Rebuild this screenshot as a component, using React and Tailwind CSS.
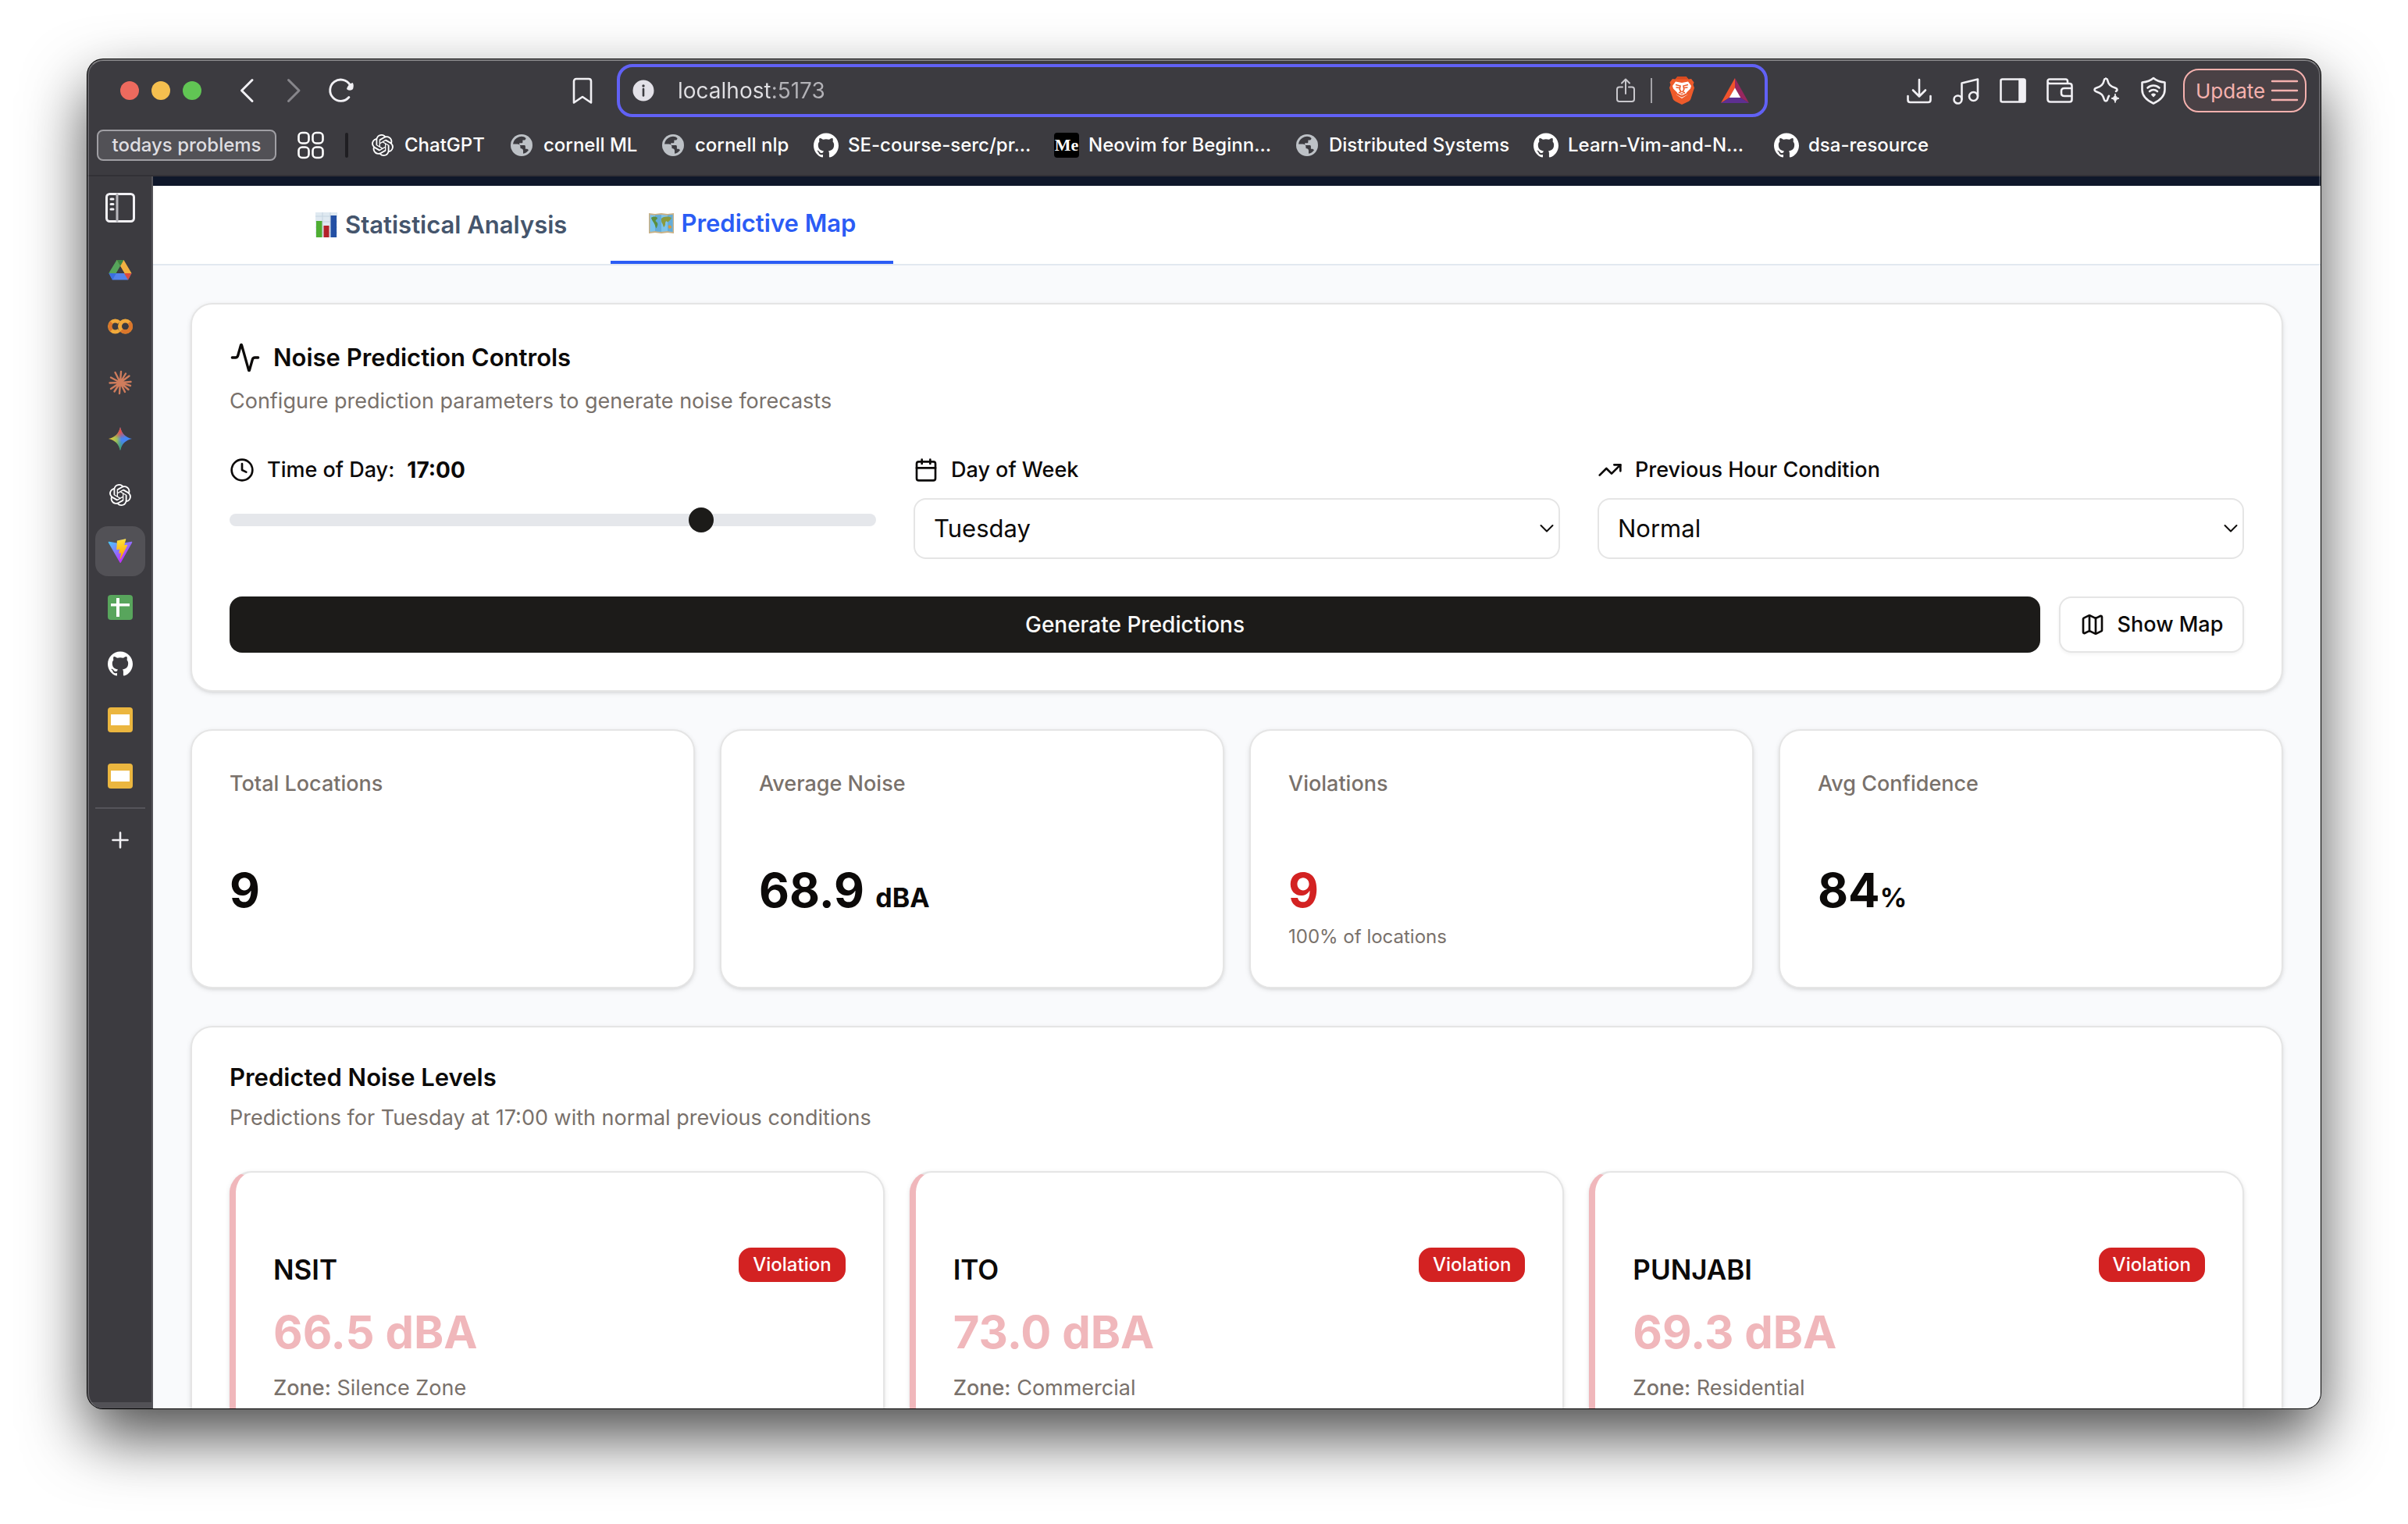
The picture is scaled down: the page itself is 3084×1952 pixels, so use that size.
import { useState } from "react";
import { Activity, Calendar, Clock, Map, TrendingUp } from "lucide-react";
import { SiGithub, SiOpenai } from "react-icons/si";

/* ---------- browser toolbar icons ---------- */

function Stroke({ children, className = "size-8", width = 3, box = "0 0 32 32" }) {
  return (
    <svg
      viewBox={box}
      className={className}
      fill="none"
      stroke="currentColor"
      strokeWidth={width}
      strokeLinecap="round"
      strokeLinejoin="round"
      aria-hidden="true"
    >
      {children}
    </svg>
  );
}

const BackIcon = () => (
  <Stroke>
    <path d="M23 2.500 9.500 16 23 29.500" />
  </Stroke>
);
const ForwardIcon = () => (
  <Stroke>
    <path d="M9.500 2.500 23 16 9.500 29.500" />
  </Stroke>
);
const ReloadIcon = () => (
  <Stroke className="size-[34px]" box="0 0 36 36">
    <path d="M28.500 27A14.500 14.500 0 1 1 30 10.500" />
    <path d="M26.500 15.500c1-3 3.500-6 6.500-7 .8 1.500.8 4.500 0 7-1.500 1.500-4.500 1.500-6.500 0z" fill="currentColor" strokeWidth="2" />
  </Stroke>
);
const BookmarkIcon = () => (
  <Stroke className="h-9 w-8" box="0 0 32 36" width={2.6}>
    <path d="M8 3h16c1.700 0 3 1.300 3 3v27.500L16 26 5 33.500V6c0-1.700 1.300-3 3-3z" />
  </Stroke>
);
const ShareIcon = () => (
  <Stroke className="size-8" width={2}>
    <path d="M12 11.500H8a3 3 0 0 0-3 3V27a3 3 0 0 0 3 3h16a3 3 0 0 0 3-3V14.500a3 3 0 0 0-3-3h-4M16 20V1.500M11 6.500l5-5 5 5" />
  </Stroke>
);
const DownloadIcon = () => (
  <Stroke className="size-9" box="0 0 36 36" width={2.6}>
    <path d="M18 4v21M10 17.500l8 8 8-8M3.500 25v5c0 2 1 3 3 3h23c2 0 3-1 3-3v-5" />
  </Stroke>
);
const MusicIcon = () => (
  <Stroke className="size-9" box="0 0 36 36" width={2.6}>
    <circle cx="7.500" cy="29.500" r="5" />
    <circle cx="27.500" cy="25.500" r="5.500" />
    <path d="M12.500 29V8.500L33 3.500V25" />
  </Stroke>
);
const PanelIcon = () => (
  <Stroke className="size-9" box="0 0 36 36" width={2.6}>
    <rect x="2.500" y="3.500" width="31" height="29" rx="2" />
    <path d="M26.500 4h6.500v28h-6.500z" fill="currentColor" />
  </Stroke>
);
const WalletIcon = () => (
  <Stroke className="size-9" box="0 0 36 36" width={2.6}>
    <path d="M28 9V6c0-1.500-1-2.500-2.500-2.500H5C3.500 3.500 2.500 4.500 2.500 6v23c0 2 1 3.500 3.500 3.500h24.500c2 0 3-1 3-3V12c0-2-1-3-3-3H6C4 9 2.500 8 2.500 6.500" />
    <path d="M33 15H24c-3 0-4 1.500-4 3.500v3c0 2 1 3.500 4 3.500h9" />
  </Stroke>
);
const SparkIcon = () => (
  <Stroke className="size-9" box="0 0 36 36" width={2.6}>
    <path d="M17 2.500c-1 0-1.700.6-2 1.700-1.400 6-3.500 8.300-10.500 10.600-2.700.9-2.700 3.500 0 4.400 7 2.300 9.100 4.600 10.500 10.600.5 2.200 3.500 2.200 4 0 .6-2.500 1-3.500 2-5M17 2.500c1 0 1.700.6 2 1.700 1.400 6 3.500 8.300 10.500 10.600 2.600.9 2.600 3 .5 4.100" />
    <path d="M29 22.500c.8 3.500 1.700 4.500 5 5.500-3.300 1-4.200 2-5 5.500-.8-3.500-1.700-4.500-5-5.500 3.300-1 4.200-2 5-5.500z" fill="currentColor" strokeWidth="1" />
  </Stroke>
);
const ShieldIcon = () => (
  <Stroke className="size-9" box="0 0 36 36" width={2.6}>
    <path d="M18 2c4 3.500 9 5 14.500 5.500V17c0 8.500-6 13.500-14.500 17.500C9.500 30.500 3.500 25.500 3.500 17V7.500C9 7 14 5.500 18 2z" />
    <path d="M10.500 14.500c4.500-4 10.500-4 15 0M13 19c3-2.600 7-2.600 10 0" />
    <path d="M15.800 23.200c1.300-1 3.100-1 4.400 0L18 25.500z" fill="currentColor" strokeWidth="1.500" />
  </Stroke>
);
const InfoIcon = () => (
  <svg viewBox="0 0 28 28" className="size-7" aria-hidden="true">
    <circle cx="14" cy="14" r="13.500" fill="#e3e1e8" />
    <circle cx="14" cy="8" r="1.700" fill="#3c3b40" />
    <path d="M14 12v8.500" stroke="#3c3b40" strokeWidth="2.600" strokeLinecap="round" />
  </svg>
);
const BraveIcon = () => (
  <svg viewBox="0 0 32 36" className="h-9 w-8" aria-hidden="true">
    <path d="M10.500 0h11l3 3.500 3.500-.5 3.500 4.500-1 3 1.500 4-4.500 14c-.5 1.500-1.500 2.500-2.500 3.200L16 36l-8.500-4.300C6.500 31 5 30 4.500 28.500L0 14.500l1.500-4-1-3L4 3l3.500.5z" fill="#ee5b2b" />
    <path d="M10.500 0h11l3 3.500H7.500z" fill="#d94a20" />
    <path d="M8 6.500 16 8l8-1.500 4 5.500-1 3.500-5 5 1.500 2.500-7.500 5-7.500-5L10 20.500l-5-5L4 12z" fill="#fff" />
    <path d="M8 10.500l6 1.500-.8 4.500 1.800 3-3 1.500M24 10.500l-6 1.500.8 4.500-1.800 3 3 1.500M8.500 14l4.500.5M23.500 14l-4.500.5" fill="none" stroke="#ee5b2b" strokeWidth="1.600" />
    <path d="M13 20.500l3 1.200 3-1.200-3 3z" fill="#ee5b2b" />
    <path d="M8 22.500 16 26.500l8-4" fill="none" stroke="#ee5b2b" strokeWidth="2.200" transform="translate(0 -1)" />
  </svg>
);
const TriangleIcon = () => (
  <svg viewBox="0 0 36 32" className="h-8 w-9" aria-hidden="true">
    <path d="M18 0 0 32l11-7 7-12z" fill="#f0532d" />
    <path d="M18 0v13l7 12 11 7z" fill="#98275f" />
    <path d="M0 32h36l-11-7H11z" fill="#5e2f91" />
    <path d="M18 12.500 25.200 25H10.800z" fill="#fff" />
  </svg>
);
const GridIcon = () => (
  <Stroke className="size-9" box="0 0 36 36" width={2.6}>
    <rect x="2.500" y="2" width="13" height="13.500" rx="4.500" />
    <rect x="20.500" y="2" width="13" height="13.500" rx="4.500" />
    <rect x="2.500" y="20.500" width="13" height="13.500" rx="4.500" />
    <rect x="20.500" y="20.500" width="13" height="13.500" rx="4.500" />
  </Stroke>
);
const ChevronIcon = () => (
  <Stroke className="pointer-events-none absolute top-1/2 right-2 h-3 w-[18px] -translate-y-1/2" box="0 0 18 12" width={2}>
    <path d="M1.500 2 9 9.500 16.500 2" />
  </Stroke>
);

/* ---------- favicons ---------- */

const GlobeIcon = () => (
  <svg viewBox="0 0 28 28" className="size-7" aria-hidden="true">
    <circle cx="14" cy="14" r="14" fill="#bdc1c6" />
    <path
      d="M17 3.200A11.200 11.200 0 0 0 3 12.500h5.500c2.500 0 4 1.500 4 4v1.500c2 0 3.500 1 3.500 3v3.800c3-.5 5.500-2.200 7-4.500-.5-1-1.500-1.600-2.800-1.600h-1.300v-3c0-1-.6-1.600-1.500-1.600h-6.200v-2.800h2.700c1 0 1.500-.5 1.500-1.500V7.500h1.600c1.600 0 2.500-1.200 2.500-2.600-.8-.8-1.600-1.300-2.500-1.700z"
      fill="#3c3b40"
    />
    <path d="M4 18.500c1.500 3.500 4.500 6 8.300 6.500v-3.200L6.500 16z" fill="#bdc1c6" />
  </svg>
);
const GithubIcon = () => <SiGithub className="size-8 text-white" />;
const ChatIcon = () => <SiOpenai className="size-7 text-white" />;
const MediumIcon = () => (
  <span className="flex size-8 items-center justify-center rounded-sm bg-black font-['Liberation_Serif',serif] text-[22px] leading-none font-bold text-white">
    Me
  </span>
);
const DriveIcon = () => (
  <svg viewBox="0 0 32 32" className="size-8" aria-hidden="true">
    <path d="M11.500 3h9L11 19.500 6.500 28 1.500 19.500z" fill="#56a55b" />
    <path d="M20.500 3l10 17h-9L11.500 3z" fill="#f1b141" />
    <path d="M11.500 3h9L16 11z" fill="#3c8642" />
    <path d="M1.500 20h29L26 28.500H6z" fill="#5383ec" />
    <path d="M1.500 20H11L6 28.500z" fill="#3a6fe0" />
    <path d="M30.500 20H21l5 8.500z" fill="#dc4b3e" />
    <path d="M16 11.500 21 20H11z" fill="#3c3b40" />
  </svg>
);
const ColabIcon = () => (
  <svg viewBox="0 0 32 32" className="size-8" fill="none" strokeWidth="5" aria-hidden="true">
    <path d="M14.500 11A7 7 0 1 0 14.500 21" stroke="#f1a93b" />
    <path d="M5 21A7 7 0 0 1 5 11" stroke="#da762b" />
    <circle cx="22.500" cy="16" r="7" stroke="#f1a93b" />
    <path d="M27.500 11a7 7 0 0 1-10 10" stroke="#da762b" />
  </svg>
);
const ClaudeIcon = () => (
  <svg viewBox="0 0 32 32" className="size-8" stroke="#cf7c5c" strokeWidth="2.400" strokeLinecap="round" aria-hidden="true">
    <path d="M16 16 2.500 16.500M16 16 4 9.500M16 16 9.500 3M16 16l1-14M16 16l7-11.500M16 16l11.500-8.500M16 16l13.500-1M16 16l13 4M16 16l10.500 9M16 16l6 12M16 16l-1 14M16 16 8.500 27.500M16 16 4 24" />
    <circle cx="16" cy="16" r="3.500" fill="#cf7c5c" stroke="none" />
  </svg>
);
const GeminiIcon = () => (
  <svg viewBox="0 0 32 32" className="size-8" aria-hidden="true">
    <defs>
      <linearGradient id="gem-base" x1="0" y1="0.500" x2="1" y2="0.500">
        <stop offset="0" stopColor="#f6c52f" />
        <stop offset="0.350" stopColor="#9cc05a" />
        <stop offset="0.550" stopColor="#4a84f0" />
        <stop offset="1" stopColor="#4285f4" />
      </linearGradient>
      <radialGradient id="gem-red" cx="0.480" cy="0" r="0.500">
        <stop offset="0" stopColor="#ea4335" />
        <stop offset="0.400" stopColor="#e2534d" />
        <stop offset="1" stopColor="#ea4335" stopOpacity="0" />
      </radialGradient>
      <radialGradient id="gem-green" cx="0.450" cy="1" r="0.450">
        <stop offset="0" stopColor="#34a853" />
        <stop offset="1" stopColor="#34a853" stopOpacity="0" />
      </radialGradient>
    </defs>
    {["url(#gem-base)", "url(#gem-red)", "url(#gem-green)"].map((fill) => (
      <path key={fill} d="M16 1C18 9.500 22.500 14 31 16 22.500 18 18 22.500 16 31 14 22.500 9.500 18 1 16 9.500 14 14 9.500 16 1z" fill={fill} />
    ))}
  </svg>
);
const ViteIcon = () => (
  <svg viewBox="0 0 410 404" className="size-8" aria-hidden="true">
    <defs>
      <linearGradient id="vite-a" x1="6" y1="33" x2="235" y2="344" gradientUnits="userSpaceOnUse">
        <stop stopColor="#41d1ff" />
        <stop offset="1" stopColor="#bd34fe" />
      </linearGradient>
      <linearGradient id="vite-b" x1="194.700" y1="8.800" x2="236" y2="293" gradientUnits="userSpaceOnUse">
        <stop stopColor="#ffea83" />
        <stop offset="0.083" stopColor="#ffdd35" />
        <stop offset="1" stopColor="#ffa800" />
      </linearGradient>
    </defs>
    <path d="M399.600 59.500 215.600 388.500c-3.800 6.800-13.500 6.800-17.400.1L10.600 59.600c-4.300-7.500 2.100-16.600 10.600-15l184.200 32.900c1.200.2 2.400.2 3.500 0l180.300-32.900c8.500-1.500 14.900 7.500 10.400 14.900z" fill="url(#vite-a)" />
    <path d="M293 1.600 156.800 28.300c-2.200.4-3.900 2.300-4 4.600l-8.400 141.500c-.2 3.300 2.900 5.900 6.100 5.200l37.900-8.800c3.600-.8 6.700 2.300 6 5.900l-11.300 55.100c-.8 3.700 2.700 6.900 6.300 5.800l23.400-7.100c3.600-1.100 7.100 2.100 6.300 5.800l-17.900 86.600c-1.100 5.400 6.100 8.400 9.100 3.700l2-3.100 111-221.400c1.900-3.700-1.300-7.900-5.400-7.100l-39 7.500c-3.700.7-6.800-2.700-5.800-6.300l25.500-88.200c1-3.600-2.100-7.100-5.600-6.400z" fill="url(#vite-b)" />
  </svg>
);
const SheetsIcon = () => (
  <svg viewBox="0 0 32 32" className="size-8" aria-hidden="true">
    <rect width="32" height="32" rx="4" fill="#58a55c" />
    <path d="M4 11h24v3.500H15V28h-4V14.500H4zM11 4h4v8h-4z" fill="#fff" />
  </svg>
);
const SlidesIcon = () => (
  <svg viewBox="0 0 32 32" className="size-8" aria-hidden="true">
    <rect width="32" height="32" rx="4" fill="#ebb63f" />
    <rect x="4" y="9" width="24" height="14" fill="#fff" />
  </svg>
);
const ToggleIcon = () => (
  <svg viewBox="0 0 38 38" className="size-[38px]" fill="none" stroke="#f1f0f4" strokeWidth="3" strokeLinecap="round" aria-hidden="true">
    <rect x="1.500" y="1.500" width="35" height="35" rx="4" />
    <path d="M15 2v34" stroke="#b9b8bd" />
    <path d="M7 8h3M7 14.500h3M7 21h3" />
  </svg>
);

/* ---------- tab emoji ---------- */

const ChartEmoji = () => (
  <svg viewBox="0 0 28 32" className="h-8 w-7" aria-hidden="true">
    <rect width="28" height="32" fill="#dfe9f1" />
    <path d="M0 5h28M0 12h28M0 19h28M0 26h28M9 0v32M19 0v32" stroke="#c5d4e0" strokeWidth="1" />
    <rect x="1" y="11" width="7.500" height="21" fill="#4fae33" />
    <rect x="10.500" y="17" width="7" height="15" fill="#b3222a" />
    <rect x="19.500" y="4" width="7.500" height="28" fill="#2450a4" />
  </svg>
);
const MapEmoji = () => (
  <svg viewBox="0 0 34 28" className="h-7 w-[34px]" aria-hidden="true">
    <path d="M1 1l8 1 8-1 8 1 8-1v26l-8-1-8 1-8-1-8 1z" fill="#c9b084" />
    <path d="M2.500 3l7 1 7.500-1 8 1 6.500-1v22l-6.500-1-8 1-7.500-1-7 1z" fill="#7cc3ec" />
    <path d="M9 3.500l8-.5v22l-8-1z" fill="#64acd8" />
    <path d="M25 3.500 31.500 3v22l-6.500-1z" fill="#64acd8" />
    <path d="M4 7c2-2 6-2 8 0 0 2-2 2-2.500 4l2.500 2.500c1 2.500-.5 4.500-1.500 7-1-1.500-1.500-4-2.500-6C7 12 4.500 10 4 7z" fill="#5b8f3c" />
    <path d="M17 8c3-3 9-3 13-1-1 3-3 3.500-4.500 5.500L23 11l-1 2.500c.5 2.500-1 5-2 5.500-1-2.500-1-4-2.500-6-.5-2-.5-3-.5-5z" fill="#8a9a3d" />
    <path d="M26 17c2-1 4 0 4 2s-3 2-4 1z" fill="#d59b3f" />
  </svg>
);

/* ---------- data ---------- */

const bookmarks = [
  { label: "ChatGPT", icon: ChatIcon, width: "w-[146px]" },
  { label: "cornell ML", icon: GlobeIcon, width: "w-[162px]" },
  { label: "cornell nlp", icon: GlobeIcon, width: "w-[164px]" },
  { label: "SE-course-serc/pr...", icon: GithubIcon, width: "w-[276px]" },
  { label: "Neovim for Beginn...", icon: MediumIcon, width: "w-[276px]" },
  { label: "Distributed Systems", icon: GlobeIcon, width: "w-[274px]" },
  { label: "Learn-Vim-and-N...", icon: GithubIcon, width: "w-[276px]" },
  { label: "dsa-resource", icon: GithubIcon, width: "w-[200px]" },
];

const sideTabs = [
  { label: "Drive", icon: DriveIcon },
  { label: "Colab", icon: ColabIcon },
  { label: "Claude", icon: ClaudeIcon },
  { label: "Gemini", icon: GeminiIcon },
  { label: "ChatGPT", icon: ChatIcon },
  { label: "Local app", icon: ViteIcon, active: true },
  { label: "Sheets", icon: SheetsIcon },
  { label: "GitHub", icon: GithubIcon },
  { label: "Slides", icon: SlidesIcon },
  { label: "Slides", icon: SlidesIcon },
];

const toolbarActions = [
  { label: "Downloads", icon: DownloadIcon },
  { label: "Media", icon: MusicIcon },
  { label: "Side panel", icon: PanelIcon },
  { label: "Wallet", icon: WalletIcon },
  { label: "Assistant", icon: SparkIcon },
  { label: "VPN", icon: ShieldIcon },
];

const stats = [
  { label: "Total Locations", value: "9" },
  { label: "Average Noise", value: "68.9 ", unit: "dBA" },
  { label: "Violations", value: "9", note: "100% of locations", alert: true },
  { label: "Avg Confidence", value: "84", unit: "%" },
];

const locations = [
  { name: "NSIT", level: "66.5 dBA", zone: "Silence Zone" },
  { name: "ITO", level: "73.0 dBA", zone: "Commercial" },
  { name: "PUNJABI", level: "69.3 dBA", zone: "Residential" },
];

const days = ["Monday", "Tuesday", "Wednesday", "Thursday", "Friday", "Saturday", "Sunday"];

/* ---------- browser chrome ---------- */

function Toolbar() {
  return (
    <div className="flex h-20 shrink-0 items-center text-[#f1f0f4]">
      <div className="flex w-[678px] items-center pr-7 pl-[42px]">
        <div className="flex gap-4">
          <span className="size-6 rounded-full bg-[#ed6a5e]" />
          <span className="size-6 rounded-full bg-[#f5bf4f]" />
          <span className="size-6 rounded-full bg-[#61c554]" />
        </div>
        <div className="ml-[42px] flex items-center gap-7">
          <button aria-label="Back"><BackIcon /></button>
          <button aria-label="Forward" className="text-[#87868b]"><ForwardIcon /></button>
          <button aria-label="Reload"><ReloadIcon /></button>
        </div>
        <button aria-label="Bookmark this page" className="ml-auto"><BookmarkIcon /></button>
      </div>

      <div className="flex h-[68px] min-w-0 flex-1 items-center rounded-[20px] border-4 border-[#6161f5] pr-5 pl-4">
        <InfoIcon />
        <input
          aria-label="Address"
          defaultValue="localhost:5173"
          className="ml-[30px] min-w-0 flex-1 bg-[linear-gradient(90deg,#e1e0e4_118px,#b3b2b7_118px)] bg-clip-text text-[28px] leading-10 text-transparent outline-none"
        />
        <button aria-label="Share" className="text-[#c9c8cd]"><ShareIcon /></button>
        <span className="ml-4 h-8 w-0.5 bg-[#a4a3a8]" />
        <button aria-label="Brave Shields" className="ml-[22px]"><BraveIcon /></button>
        <button aria-label="Rewards" className="ml-[34px]"><TriangleIcon /></button>
      </div>

      <div className="flex w-[708px] items-center justify-end pr-[18px]">
        <div className="flex gap-6">
          {toolbarActions.map(({ label, icon: Icon }) => (
            <button key={label} aria-label={label}><Icon /></button>
          ))}
        </div>
        <button className="ml-5 flex h-14 w-[158px] items-center justify-between rounded-[20px] border-2 border-[#f5b1ae] bg-[#4a4145] pr-2 pl-3.5 text-[26px] text-[#f5b1ae]">
          Update
          <Stroke className="h-8 w-9" box="0 0 36 32" width={2.4}>
            <path d="M2 4h32M2 16h32M2 28h32" />
          </Stroke>
        </button>
      </div>
    </div>
  );
}

function BookmarksBar() {
  return (
    <nav aria-label="Bookmarks" className="flex h-[60px] shrink-0 items-center pl-3 text-2xl font-medium text-white">
      <button className="h-10 w-[230px] rounded-lg border-2 border-[#a09fa4] bg-[#525156] leading-8 text-[#dfdee2]">
        todays problems
      </button>
      <button aria-label="Tab groups" className="ml-[26px]"><GridIcon /></button>
      <span className="ml-[26px] h-8 w-1 rounded-full bg-[#1f1e22]" />
      <ul className="ml-7 flex gap-8">
        {bookmarks.map(({ label, icon: Icon, width }) => (
          <li key={label} className={width}>
            <a href="#" className="flex items-center gap-3 whitespace-nowrap">
              <span className="flex size-8 shrink-0 items-center justify-center"><Icon /></span>
              {label}
            </a>
          </li>
        ))}
      </ul>
    </nav>
  );
}

function SideTabs() {
  return (
    <aside className="flex w-[84px] shrink-0 flex-col border-r-2 border-[#55545a] bg-[#3c3b40]">
      <div className="flex flex-col items-center pl-0.5">
        <button aria-label="Toggle sidebar" className="flex h-20 shrink-0 items-center"><ToggleIcon /></button>
        <ul className="mt-2 flex flex-col gap-2">
          {sideTabs.map(({ label, icon: Icon, active }, i) => (
            <li key={i}>
              <button
                aria-label={label}
                className={
                  active
                    ? "flex size-16 items-center justify-center rounded-2xl bg-[#525156]"
                    : "flex size-16 items-center justify-center rounded-2xl"
                }
              >
                <Icon />
              </button>
            </li>
          ))}
        </ul>
        <span className="mt-2 h-0.5 w-16 shrink-0 bg-[#55545a]" />
        <button aria-label="New tab" className="mt-2 flex size-16 items-center justify-center text-[#f1f0f4]">
          <Stroke width={2.6}>
            <path d="M6.500 16h19M16 6.500v19" />
          </Stroke>
        </button>
      </div>
      <span className="mt-auto h-2 w-full bg-[#525156]" />
    </aside>
  );
}

/* ---------- page ---------- */

function Card({ className = "", children }) {
  return (
    <section
      className={`rounded-[28px] border-2 border-[#e5e5e5] bg-white p-12 shadow-[0_2px_6px_rgba(0,0,0,0.1),0_2px_4px_-2px_rgba(0,0,0,0.1)] ${className}`}
    >
      {children}
    </section>
  );
}

function SelectField({ id, label, icon: Icon, options, value, onChange }) {
  return (
    <div className="flex flex-col gap-4">
      <label htmlFor={id} className="flex h-10 items-center gap-4 text-[27px] font-medium">
        <Icon className="size-8" />
        {label}
      </label>
      <div className="relative">
        <select
          id={id}
          value={value}
          onChange={(e) => onChange(e.target.value)}
          className="h-[78px] w-full appearance-none rounded-2xl border-2 border-[#e5e5e5] bg-white px-6 text-[31px]"
        >
          {options.map((o) => (
            <option key={o}>{o}</option>
          ))}
        </select>
        <ChevronIcon />
      </div>
    </div>
  );
}

function Controls() {
  const [hour, setHour] = useState(17);
  const [day, setDay] = useState("Tuesday");
  const [condition, setCondition] = useState("Normal");
  return (
    <Card>
      <h2 className="flex h-10 items-center gap-4 text-[31px] font-semibold">
        <Activity className="size-10" />
        Noise Prediction Controls
      </h2>
      <p className="mt-4 text-[27px] leading-10 text-[#79716b]">
        Configure prediction parameters to generate noise forecasts
      </p>
      <div className="mt-12 grid grid-cols-3 gap-12">
        <div className="flex flex-col gap-4">
          <label htmlFor="hour" className="flex h-10 items-center gap-4 text-[27px] font-medium">
            <Clock className="size-8" />
            Time of Day:
            <span className="text-[28px] font-bold">{hour}:00</span>
          </label>
          <div className="flex h-14 items-center">
            <input
              id="hour"
              type="range"
              min="0"
              max="23"
              value={hour}
              onChange={(e) => setHour(Number(e.target.value))}
              className="h-4 w-full appearance-none rounded-lg bg-gray-200 [&::-webkit-slider-thumb]:size-8 [&::-webkit-slider-thumb]:appearance-none [&::-webkit-slider-thumb]:rounded-full [&::-webkit-slider-thumb]:bg-[#1c1b19]"
            />
          </div>
        </div>
        <SelectField id="day" label="Day of Week" icon={Calendar} options={days} value={day} onChange={setDay} />
        <SelectField
          id="condition"
          label="Previous Hour Condition"
          icon={TrendingUp}
          options={["Quiet", "Normal", "Noisy"]}
          value={condition}
          onChange={setCondition}
        />
      </div>
      <div className="mt-12 flex gap-6 text-[27px] font-medium">
        <button className="h-[72px] flex-1 rounded-2xl bg-[#1c1b19] text-[28px] text-[#fafaf9]">Generate Predictions</button>
        <button className="flex h-[72px] w-[237px] items-center justify-center gap-4 rounded-2xl border-2 border-[#e5e5e5] bg-white shadow-[0_2px_4px_rgba(0,0,0,0.05)]">
          <Map className="size-8" />
          Show Map
        </button>
      </div>
    </Card>
  );
}

function StatCard({ label, value, unit, note, alert }) {
  return (
    <Card>
      <h3 className="text-[27px] leading-10 font-medium text-[#79716b]">{label}</h3>
      <p className={alert ? "mt-20 text-[60px] leading-[72px] font-bold text-[#d32222]" : "mt-20 text-[60px] leading-[72px] font-bold"}>
        {value}
        {unit && <span className="text-[34px]">{unit}</span>}
      </p>
      {note && <p className="mt-2 text-2xl leading-8 text-[#79716b]">{note}</p>}
    </Card>
  );
}

function LocationCard({ name, level, zone }) {
  return (
    <article className="rounded-[28px] border-2 border-l-8 border-[#e5e5e5] border-l-[#f0b7bb] bg-white px-12 py-24 shadow-[0_2px_6px_rgba(0,0,0,0.1),0_2px_4px_-2px_rgba(0,0,0,0.1)]">
      <div className="flex items-start justify-between">
        <h3 className="text-[35px] leading-14 font-semibold">{name}</h3>
        <span className="flex h-11 items-center rounded-2xl bg-[#d32222] px-[18px] text-2xl font-medium text-white">
          Violation
        </span>
      </div>
      <p className="mt-4 text-[58px] leading-[72px] font-bold text-[#f0b7bb]">{level}</p>
      <p className="mt-4 text-[27px] leading-10 text-[#79716b]">
        <span className="font-medium">Zone:</span> {zone}
      </p>
    </article>
  );
}

function Page() {
  return (
    <div className="min-w-0 flex-1 overflow-hidden bg-[#f9fafc] text-[#0c0a09]">
      <div className="h-3 bg-[#0f172a]" />
      <nav aria-label="Views" className="flex h-[102px] gap-2 border-b-2 border-slate-200 bg-white px-40 text-[31px] font-semibold">
        <button className="flex items-center gap-2.5 px-12 text-[#45556c]">
          <ChartEmoji />
          Statistical Analysis
        </button>
        <button className="flex items-center gap-2 border-b-4 border-[#2b5cf5] px-12 text-[#2b5cf5]">
          <MapEmoji />
          Predictive Map
        </button>
      </nav>
      <main className="flex flex-col gap-12 p-12">
        <Controls />
        <div className="grid grid-cols-4 gap-8">
          {stats.map((s) => (
            <StatCard key={s.label} {...s} />
          ))}
        </div>
        <Card>
          <h2 className="text-[31px] leading-8 font-semibold">Predicted Noise Levels</h2>
          <p className="mt-4 text-[27px] leading-10 text-[#79716b]">
            Predictions for Tuesday at 17:00 with normal previous conditions
          </p>
          <div className="mt-12 grid grid-cols-3 gap-8">
            {locations.map((l) => (
              <LocationCard key={l.name} {...l} />
            ))}
          </div>
        </Card>
      </main>
    </div>
  );
}

export default function App() {
  return (
    <div className="flex h-screen flex-col overflow-hidden bg-white px-28 pt-[76px] pb-[148px] font-[Inter,'Liberation_Sans',sans-serif]">
      <div className="relative flex min-h-0 flex-1 flex-col overflow-hidden rounded-[20px] bg-[#3c3b40] shadow-[0_0_0_1px_#000,0_36px_80px_rgba(0,0,0,0.7)]">
        <header className="flex h-[150px] shrink-0 flex-col border-b-2 border-[#323136]">
          <Toolbar />
          <BookmarksBar />
        </header>
        <div className="flex min-h-0 flex-1">
          <SideTabs />
          <Page />
        </div>
        <div className="pointer-events-none absolute inset-0 rounded-[20px] border-2 border-b-0 border-white/20 border-t-white/35" />
      </div>
    </div>
  );
}
